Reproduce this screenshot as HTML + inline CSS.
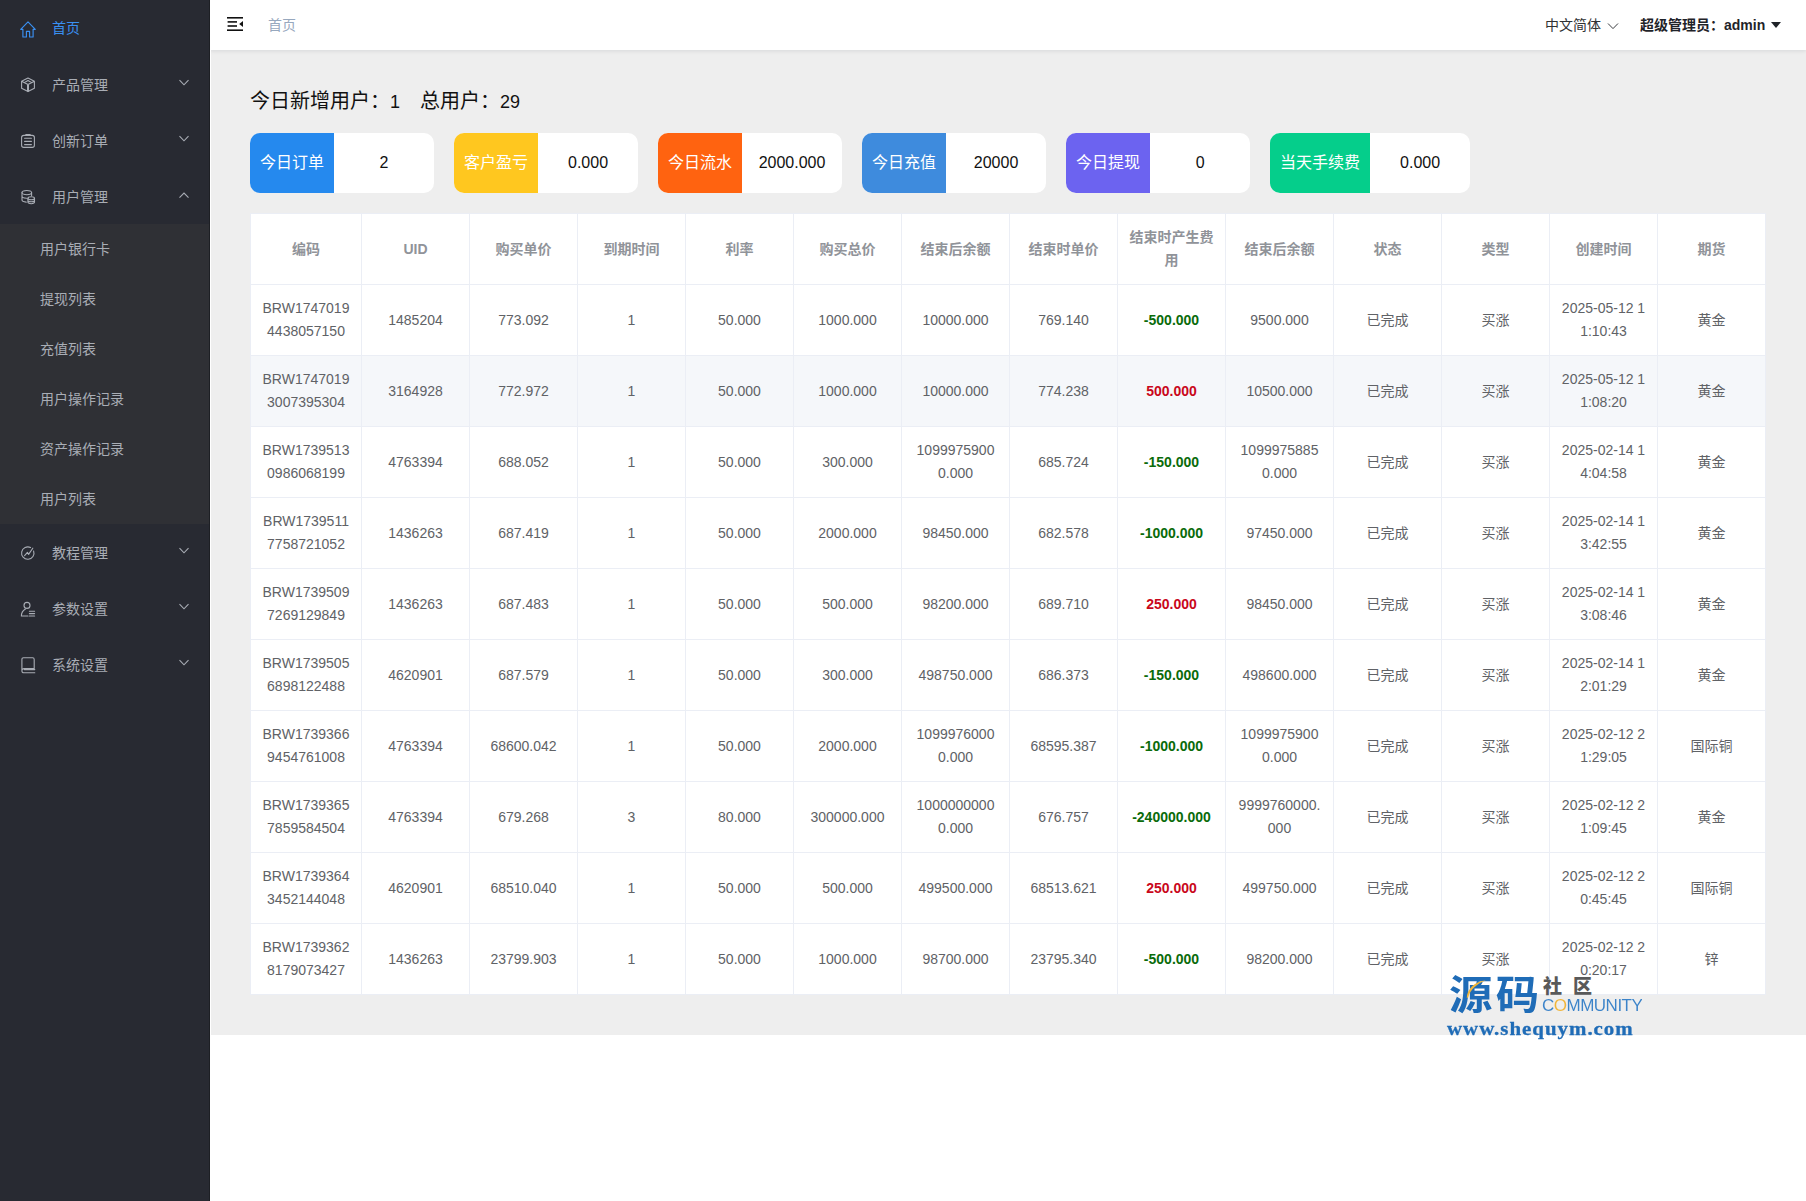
<!DOCTYPE html>
<html lang="zh-CN">
<head>
<meta charset="utf-8">
<title>首页</title>
<style>
*{box-sizing:border-box;}
html,body{margin:0;padding:0;}
body{width:1806px;height:1201px;overflow:hidden;background:#fff;position:relative;
  font-family:"Liberation Sans","Noto Sans CJK SC",sans-serif;font-size:14px;color:#303133;}
/* ---------- sidebar ---------- */
.sidebar{position:absolute;left:0;top:0;width:210px;height:1201px;background:#282a32;z-index:5;border-right:1px solid #1d1f24;}
.strip{position:absolute;left:210px;top:50px;width:1px;height:985px;background:#fff;z-index:4;}
.mi{position:relative;height:56px;line-height:58px;padding-left:52px;color:#a9adb5;font-size:14px;white-space:nowrap;}
.mi.act{color:#3a90f2;line-height:56px;}
.mi.act svg.ic{top:20.5px;}
.mi svg.ic{position:absolute;left:20px;top:21px;width:16px;height:16px;overflow:visible;}
.mi svg.ar{position:absolute;left:178px;top:21px;width:12px;height:12px;}
.sub{background:#2f3035;}
.si{height:50px;line-height:50px;padding-left:40px;color:#a9adb5;font-size:14px;}
/* ---------- header ---------- */
.navbar{position:absolute;left:210px;top:0;width:1596px;height:50px;background:#fff;box-shadow:0 1px 4px rgba(0,21,41,.10);z-index:3;}
.hamb{position:absolute;left:17px;top:17px;width:16px;height:14px;}
.bc{position:absolute;left:58px;top:0;line-height:50px;font-size:14px;color:#97a8be;}
.lang{position:absolute;left:1335px;top:0;line-height:50px;font-size:14px;color:#303133;}
.lang svg{position:absolute;left:62px;top:19.5px;width:12px;height:12px;}
.user{position:absolute;left:1430px;top:0;line-height:50px;font-size:14px;color:#1f2329;font-weight:bold;white-space:nowrap;}
.caret{position:absolute;left:1561px;top:22px;width:0;height:0;border-left:5px solid transparent;border-right:5px solid transparent;border-top:6px solid #1f2329;}
/* ---------- main ---------- */
.main{position:absolute;left:210px;top:50px;width:1596px;height:985px;background:#eeeeee;}
.title{position:absolute;left:40px;top:38px;font-size:20px;line-height:26px;color:#111;white-space:nowrap;}
.title span{margin-right:20px;}
.title em{font-style:normal;font-size:18px;}
.cards{position:absolute;left:40px;top:83px;display:flex;}
.card{display:flex;height:60px;line-height:60px;border-radius:10px;overflow:hidden;margin-right:20px;background:#fff;font-size:16px;}
.card .lb{padding:0 10px;color:#fff;white-space:nowrap;}
.card .vl{width:100px;text-align:center;color:#111;}
/* ---------- table ---------- */
.tbl{position:absolute;left:40px;top:163px;width:1516px;border-left:1px solid #ebeef5;border-top:1px solid #ebeef5;background:#fff;}
table{border-collapse:separate;border-spacing:0;table-layout:fixed;width:1515px;}
th,td{padding:12px 0;border-right:1px solid #ebeef5;border-bottom:1px solid #ebeef5;text-align:center;vertical-align:middle;font-size:14px;}
th{color:#909399;font-weight:bold;background:#fff;}
td{color:#606266;background:#fff;}
tr.hov td{background:#f5f7fa;}
.cell{padding:0 10px;line-height:23px;word-break:break-all;overflow:hidden;}
b.neg{color:#0a6b0a;}
b.pos{color:#c9071b;}
/* ---------- watermark ---------- */
.wm{position:absolute;left:1446px;top:970px;width:210px;height:75px;z-index:9;pointer-events:none;}
.wm .a{position:absolute;left:3px;top:-4px;font-size:40px;line-height:52px;font-weight:700;color:#1f6cb7;font-family:"Noto Sans CJK SC",sans-serif;letter-spacing:3px;white-space:nowrap;transform:scaleX(1.085);transform-origin:0 0;}
.wm .b{position:absolute;left:97px;top:3px;font-size:19px;line-height:24px;font-weight:900;color:#595959;font-family:"Noto Sans CJK SC",sans-serif;letter-spacing:11px;white-space:nowrap;}
.wm .c{position:absolute;left:96px;top:26px;font-size:17px;line-height:20px;letter-spacing:-0.5px;white-space:nowrap;font-family:"Liberation Sans",sans-serif;color:#3b83c9;background:linear-gradient(90deg,#3b83c9 0,#3b83c9 11.7px,#f0b53a 11.7px,#f0b53a 24.3px,#3b83c9 24.3px,#3b83c9 100%);-webkit-background-clip:text;background-clip:text;-webkit-text-fill-color:transparent;}
.wm .d{position:absolute;left:1px;top:47px;font-size:19px;line-height:24px;font-weight:bold;color:#1f6cb7;font-family:"Liberation Serif",serif;letter-spacing:0.9px;white-space:nowrap;transform:scaleX(1.1);transform-origin:0 0;-webkit-text-stroke-width:0.3px;}
.wm svg{position:absolute;left:0;top:0;width:210px;height:75px;}
</style>
</head>
<body>
<div class="sidebar">
  <div class="mi act">
    <svg class="ic" viewBox="0 0 16 16" fill="none" stroke="currentColor" stroke-width="1.15" stroke-linejoin="round"><path d="M8 0.9 L0.7 8.3 H2.9 V16 H6.4 V10.4 H9.6 V16 H13.1 V8.3 H15.3 Z"/></svg>首页</div>
  <div class="mi">
    <svg class="ic" viewBox="0 0 16 16" fill="none" stroke="currentColor" stroke-width="1.1" stroke-linejoin="round"><path d="M8 1.1 L14.4 4.3 V11.2 L8 14.6 L1.6 11.2 V4.3 Z M1.6 4.3 L8 7.6 L14.4 4.3 M4.6 5.4 L8 3.6 L11.4 5.4"/><path d="M8 7.8 V14.4" stroke-width="2"/></svg>产品管理
    <svg class="ar" viewBox="0 0 12 12" fill="none" stroke="currentColor" stroke-width="1.1"><path d="M1.5 3.2 L6 7.8 L10.5 3.2"/></svg></div>
  <div class="mi">
    <svg class="ic" viewBox="0 0 16 16" fill="none" stroke="currentColor" stroke-width="1.1" stroke-linecap="round"><rect x="1.6" y="2.4" width="12.8" height="12" rx="2.2"/><path d="M6 1.8 H10" stroke-width="1.6"/><path d="M4.6 5.2 H11.4 M4.6 8.4 H11.4 M4.6 11.6 H11.4"/></svg>创新订单
    <svg class="ar" viewBox="0 0 12 12" fill="none" stroke="currentColor" stroke-width="1.1"><path d="M1.5 3.2 L6 7.8 L10.5 3.2"/></svg></div>
  <div class="mi">
    <svg class="ic" viewBox="0 0 16 16" fill="none" stroke="currentColor" stroke-width="1.1" stroke-linecap="round"><ellipse cx="6.8" cy="3.6" rx="4.8" ry="2.1"/><path d="M2 3.6 V11 C2 12.1 3.7 12.9 6.2 13.1 M11.6 3.6 V6.6 M2 7.3 C2 8.4 3.9 9.2 6.6 9.3"/><ellipse cx="11.2" cy="9.2" rx="3.3" ry="1.5"/><path d="M7.9 9.2 V13.1 C7.9 14 9.4 14.7 11.2 14.7 C13 14.7 14.5 14 14.5 13.1 V9.2 M7.9 11.2 C7.9 12.1 9.4 12.8 11.2 12.8 C13 12.8 14.5 12.1 14.5 11.2"/></svg>用户管理
    <svg class="ar" viewBox="0 0 12 12" fill="none" stroke="currentColor" stroke-width="1.1"><path d="M1.5 8.6 L6 4 L10.5 8.6"/></svg></div>
  <div class="sub">
    <div class="si">用户银行卡</div>
    <div class="si">提现列表</div>
    <div class="si">充值列表</div>
    <div class="si">用户操作记录</div>
    <div class="si">资产操作记录</div>
    <div class="si">用户列表</div>
  </div>
  <div class="mi">
    <svg class="ic" viewBox="0 0 16 16" fill="none" stroke="currentColor" stroke-width="1.1" stroke-linecap="round" stroke-linejoin="round"><path d="M13.6 6 A6.2 6.2 0 1 1 10.6 2.6 M4.6 10.6 L7.4 7.4 L8.6 9.4 L12.8 3.2"/></svg>教程管理
    <svg class="ar" viewBox="0 0 12 12" fill="none" stroke="currentColor" stroke-width="1.1"><path d="M1.5 3.2 L6 7.8 L10.5 3.2"/></svg></div>
  <div class="mi">
    <svg class="ic" viewBox="0 0 16 16" fill="none" stroke="currentColor" stroke-width="1.1" stroke-linecap="round"><circle cx="7" cy="4.4" r="3"/><path d="M8 15 H1.4 C1.4 11.8 3 9.4 5.4 8 M9.4 10.2 H14.6 M9.4 12.6 H14.6 M9.4 15 H14.6"/></svg>参数设置
    <svg class="ar" viewBox="0 0 12 12" fill="none" stroke="currentColor" stroke-width="1.1"><path d="M1.5 3.2 L6 7.8 L10.5 3.2"/></svg></div>
  <div class="mi">
    <svg class="ic" viewBox="0 0 16 16" fill="none" stroke="currentColor" stroke-width="1.1" stroke-linecap="round"><path d="M1.9 13.6 V2.4 Q1.9 0.8 3.5 0.8 H12.6 Q14.2 0.8 14.2 2.4 V11.6 H4 A2.1 2.1 0 0 0 4 15.8 H14.8 M4.4 12.6 H14.8"/></svg>系统设置
    <svg class="ar" viewBox="0 0 12 12" fill="none" stroke="currentColor" stroke-width="1.1"><path d="M1.5 3.2 L6 7.8 L10.5 3.2"/></svg></div>
</div>

<div class="strip"></div>
<div class="navbar">
  <svg class="hamb" viewBox="0 0 16 14" fill="#111"><rect x="0" y="0" width="16" height="1.6"/><rect x="0.6" y="4.1" width="9.4" height="1.6"/><rect x="0.6" y="8.2" width="9.4" height="1.6"/><rect x="0" y="12.4" width="16" height="1.6"/><path d="M16 4 V10 L12.2 7 Z"/></svg>
  <div class="bc">首页</div>
  <div class="lang">中文简体<svg viewBox="0 0 12 12" fill="none" stroke="#3a3c40" stroke-width="1"><path d="M1 3.5 L6 8.6 L11 3.5"/></svg></div>
  <div class="user">超级管理员：admin</div>
  <div class="caret"></div>
</div>

<div class="main">
  <div class="title"><span>今日新增用户：<em>1</em></span><span>总用户：<em>29</em></span></div>
  <div class="cards">
    <div class="card"><div class="lb" style="background:#2589ee">今日订单</div><div class="vl">2</div></div>
    <div class="card"><div class="lb" style="background:#ffc71f">客户盈亏</div><div class="vl">0.000</div></div>
    <div class="card"><div class="lb" style="background:#ff6310">今日流水</div><div class="vl">2000.000</div></div>
    <div class="card"><div class="lb" style="background:#3e8bdd">今日充值</div><div class="vl">20000</div></div>
    <div class="card"><div class="lb" style="background:#6c63f0">今日提现</div><div class="vl">0</div></div>
    <div class="card"><div class="lb" style="background:#05ce8b">当天手续费</div><div class="vl">0.000</div></div>
  </div>
  <div class="tbl">
    <table>
      <colgroup><col style="width:111px"><col style="width:108px"><col style="width:108px"><col style="width:108px"><col style="width:108px"><col style="width:108px"><col style="width:108px"><col style="width:108px"><col style="width:108px"><col style="width:108px"><col style="width:108px"><col style="width:108px"><col style="width:108px"><col style="width:108px"></colgroup>
      <thead><tr>
        <th><div class="cell">编码</div></th><th><div class="cell">UID</div></th><th><div class="cell">购买单价</div></th><th><div class="cell">到期时间</div></th><th><div class="cell">利率</div></th><th><div class="cell">购买总价</div></th><th><div class="cell">结束后余额</div></th><th><div class="cell">结束时单价</div></th><th><div class="cell">结束时产生费用</div></th><th><div class="cell">结束后余额</div></th><th><div class="cell">状态</div></th><th><div class="cell">类型</div></th><th><div class="cell">创建时间</div></th><th><div class="cell">期货</div></th>
      </tr></thead>
      <tbody>
<tr><td><div class="cell">BRW17470194438057150</div></td><td><div class="cell">1485204</div></td><td><div class="cell">773.092</div></td><td><div class="cell">1</div></td><td><div class="cell">50.000</div></td><td><div class="cell">1000.000</div></td><td><div class="cell">10000.000</div></td><td><div class="cell">769.140</div></td><td><div class="cell"><b class="neg">-500.000</b></div></td><td><div class="cell">9500.000</div></td><td><div class="cell">已完成</div></td><td><div class="cell">买涨</div></td><td><div class="cell">2025-05-12 11:10:43</div></td><td><div class="cell">黄金</div></td></tr>
<tr class="hov"><td><div class="cell">BRW17470193007395304</div></td><td><div class="cell">3164928</div></td><td><div class="cell">772.972</div></td><td><div class="cell">1</div></td><td><div class="cell">50.000</div></td><td><div class="cell">1000.000</div></td><td><div class="cell">10000.000</div></td><td><div class="cell">774.238</div></td><td><div class="cell"><b class="pos">500.000</b></div></td><td><div class="cell">10500.000</div></td><td><div class="cell">已完成</div></td><td><div class="cell">买涨</div></td><td><div class="cell">2025-05-12 11:08:20</div></td><td><div class="cell">黄金</div></td></tr>
<tr><td><div class="cell">BRW17395130986068199</div></td><td><div class="cell">4763394</div></td><td><div class="cell">688.052</div></td><td><div class="cell">1</div></td><td><div class="cell">50.000</div></td><td><div class="cell">300.000</div></td><td><div class="cell">10999759000.000</div></td><td><div class="cell">685.724</div></td><td><div class="cell"><b class="neg">-150.000</b></div></td><td><div class="cell">10999758850.000</div></td><td><div class="cell">已完成</div></td><td><div class="cell">买涨</div></td><td><div class="cell">2025-02-14 14:04:58</div></td><td><div class="cell">黄金</div></td></tr>
<tr><td><div class="cell">BRW17395117758721052</div></td><td><div class="cell">1436263</div></td><td><div class="cell">687.419</div></td><td><div class="cell">1</div></td><td><div class="cell">50.000</div></td><td><div class="cell">2000.000</div></td><td><div class="cell">98450.000</div></td><td><div class="cell">682.578</div></td><td><div class="cell"><b class="neg">-1000.000</b></div></td><td><div class="cell">97450.000</div></td><td><div class="cell">已完成</div></td><td><div class="cell">买涨</div></td><td><div class="cell">2025-02-14 13:42:55</div></td><td><div class="cell">黄金</div></td></tr>
<tr><td><div class="cell">BRW17395097269129849</div></td><td><div class="cell">1436263</div></td><td><div class="cell">687.483</div></td><td><div class="cell">1</div></td><td><div class="cell">50.000</div></td><td><div class="cell">500.000</div></td><td><div class="cell">98200.000</div></td><td><div class="cell">689.710</div></td><td><div class="cell"><b class="pos">250.000</b></div></td><td><div class="cell">98450.000</div></td><td><div class="cell">已完成</div></td><td><div class="cell">买涨</div></td><td><div class="cell">2025-02-14 13:08:46</div></td><td><div class="cell">黄金</div></td></tr>
<tr><td><div class="cell">BRW17395056898122488</div></td><td><div class="cell">4620901</div></td><td><div class="cell">687.579</div></td><td><div class="cell">1</div></td><td><div class="cell">50.000</div></td><td><div class="cell">300.000</div></td><td><div class="cell">498750.000</div></td><td><div class="cell">686.373</div></td><td><div class="cell"><b class="neg">-150.000</b></div></td><td><div class="cell">498600.000</div></td><td><div class="cell">已完成</div></td><td><div class="cell">买涨</div></td><td><div class="cell">2025-02-14 12:01:29</div></td><td><div class="cell">黄金</div></td></tr>
<tr><td><div class="cell">BRW17393669454761008</div></td><td><div class="cell">4763394</div></td><td><div class="cell">68600.042</div></td><td><div class="cell">1</div></td><td><div class="cell">50.000</div></td><td><div class="cell">2000.000</div></td><td><div class="cell">10999760000.000</div></td><td><div class="cell">68595.387</div></td><td><div class="cell"><b class="neg">-1000.000</b></div></td><td><div class="cell">10999759000.000</div></td><td><div class="cell">已完成</div></td><td><div class="cell">买涨</div></td><td><div class="cell">2025-02-12 21:29:05</div></td><td><div class="cell">国际铜</div></td></tr>
<tr><td><div class="cell">BRW17393657859584504</div></td><td><div class="cell">4763394</div></td><td><div class="cell">679.268</div></td><td><div class="cell">3</div></td><td><div class="cell">80.000</div></td><td><div class="cell">300000.000</div></td><td><div class="cell">10000000000.000</div></td><td><div class="cell">676.757</div></td><td><div class="cell"><b class="neg">-240000.000</b></div></td><td><div class="cell">9999760000.000</div></td><td><div class="cell">已完成</div></td><td><div class="cell">买涨</div></td><td><div class="cell">2025-02-12 21:09:45</div></td><td><div class="cell">黄金</div></td></tr>
<tr><td><div class="cell">BRW17393643452144048</div></td><td><div class="cell">4620901</div></td><td><div class="cell">68510.040</div></td><td><div class="cell">1</div></td><td><div class="cell">50.000</div></td><td><div class="cell">500.000</div></td><td><div class="cell">499500.000</div></td><td><div class="cell">68513.621</div></td><td><div class="cell"><b class="pos">250.000</b></div></td><td><div class="cell">499750.000</div></td><td><div class="cell">已完成</div></td><td><div class="cell">买涨</div></td><td><div class="cell">2025-02-12 20:45:45</div></td><td><div class="cell">国际铜</div></td></tr>
<tr><td><div class="cell">BRW17393628179073427</div></td><td><div class="cell">1436263</div></td><td><div class="cell">23799.903</div></td><td><div class="cell">1</div></td><td><div class="cell">50.000</div></td><td><div class="cell">1000.000</div></td><td><div class="cell">98700.000</div></td><td><div class="cell">23795.340</div></td><td><div class="cell"><b class="neg">-500.000</b></div></td><td><div class="cell">98200.000</div></td><td><div class="cell">已完成</div></td><td><div class="cell">买涨</div></td><td><div class="cell">2025-02-12 20:20:17</div></td><td><div class="cell">锌</div></td></tr>      </tbody>
    </table>
  </div>
</div>

<div class="wm">
  <div class="a">源码</div>
  <div class="b">社区</div>
  <div class="c">COMMUNITY</div>
  <div class="d">www.shequym.com</div>
  <svg viewBox="0 0 210 75"><path d="M20.8 28 C20.6 19.5 29 10.8 39.8 10.4 C31 13.4 24 19.6 22.2 27.6 Z" fill="#f0b53a"/></svg>
</div>
</body>
</html>
